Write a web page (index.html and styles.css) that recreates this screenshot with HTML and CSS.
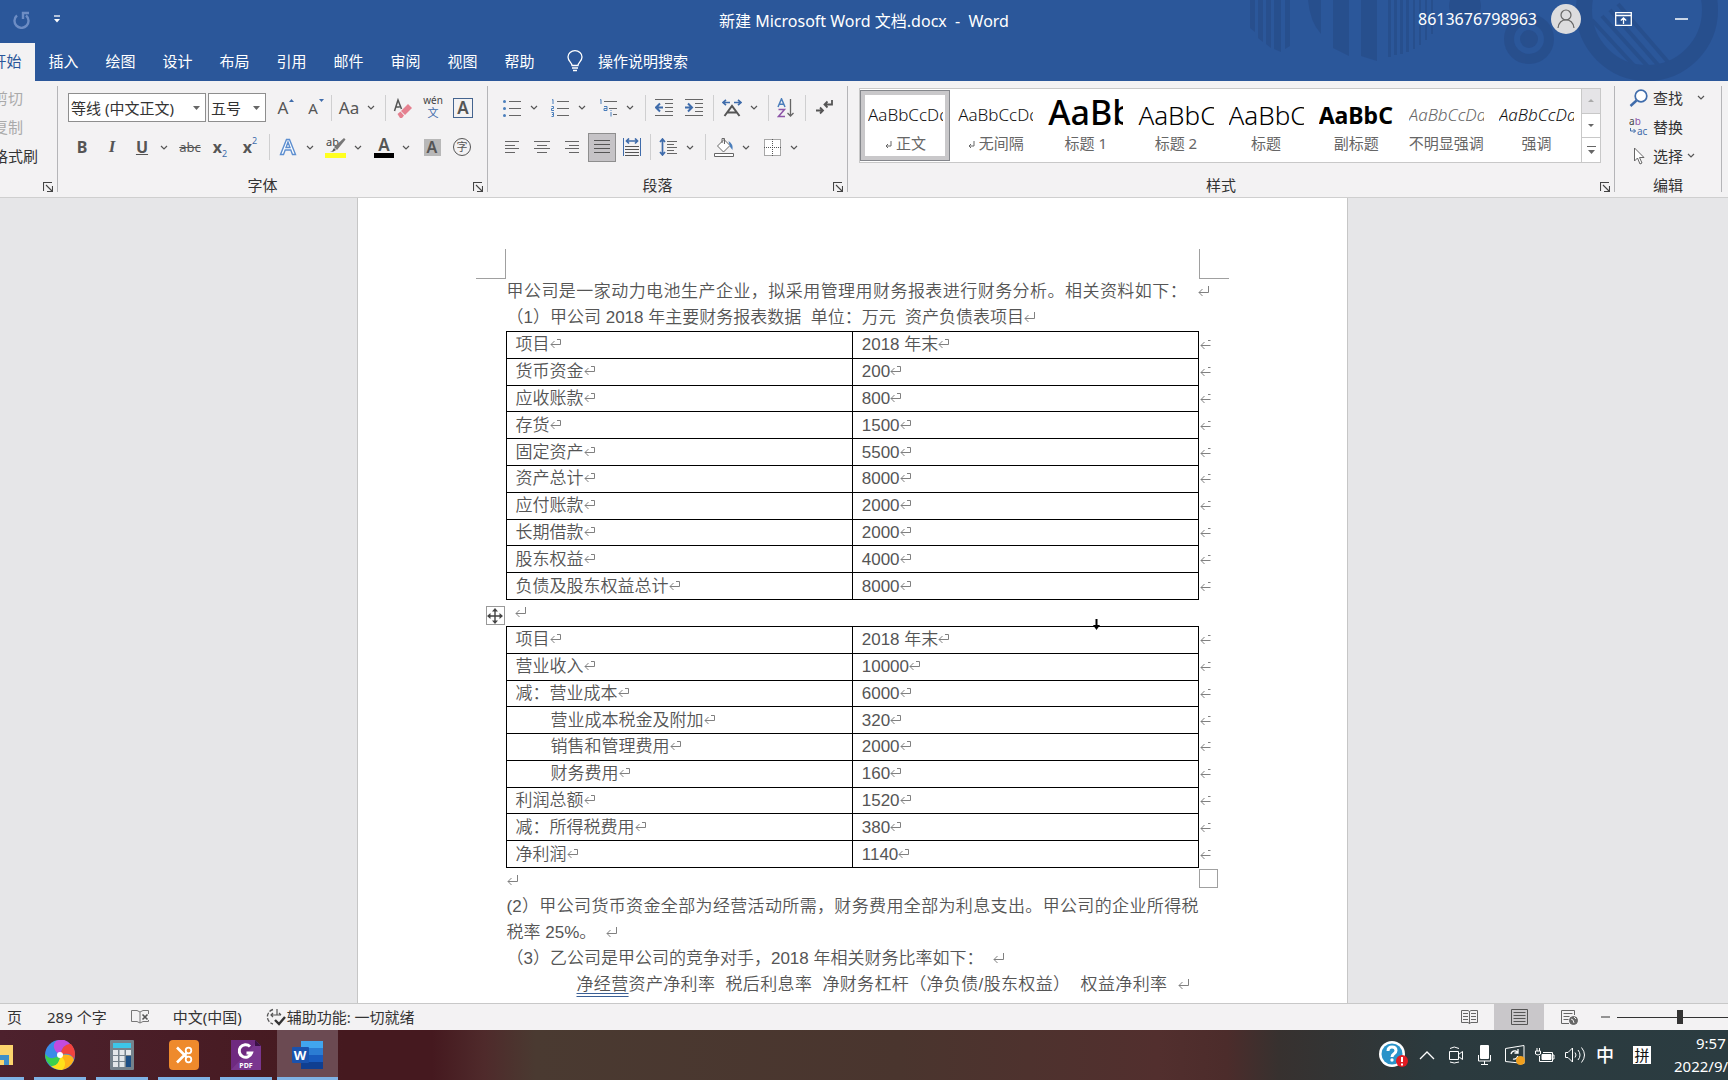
FILE: index.html
```html
<!DOCTYPE html>
<html lang="zh-CN">
<head>
<meta charset="utf-8">
<title>新建 Microsoft Word 文档.docx - Word</title>
<link rel="stylesheet" href="styles.css">
</head>
<body>
<svg class="sprite" aria-hidden="true">
  <symbol id="chev" viewBox="0 0 8 6"><path d="M1 1l3 3 3-3" fill="none" stroke="#555" stroke-width="1.2"/></symbol>
  <symbol id="launch" viewBox="0 0 10 10"><path d="M.5 9V.5H9M3 3l6 6M9.500 4v5.500H4" fill="none" stroke="#444" stroke-width="1.100"/></symbol>
  <symbol id="pm" viewBox="0 0 12 11"><path d="M10.500 0v6.500H1M4.500 3L1 6.500 4.500 10" fill="none" stroke="#808080"/></symbol>
  <symbol id="cm" viewBox="0 0 12 11"><path d="M7 .5h3.500v5H1M4.500 2L1 5.500 4.500 9" fill="none" stroke="#808080"/></symbol>
  <symbol id="rm" viewBox="0 0 12 11"><path d="M1 6.500h9.500M4.500 3L1 6.500 4.500 10M8 1.500h2.500" fill="none" stroke="#808080"/></symbol>
</svg>

<header class="titlebar">
  <svg class="deco" viewBox="0 0 508 81" aria-hidden="true">
    <g fill="#264a86" opacity=".6">
      <path d="M30 0h5v32l-5-4zM38 0h5v42l-5-4zM46 0h5v48l-5-4zM54 0h7v52l-7-3zM65 0h5v46l-5 3z"/>
      <path d="M88 0h13v34q-11-12-13-34zM113 0h16v56l-16-8zM141 0h16v61l-16-5zM168 0h3v57h-3zM174 0h3v55h-3zM180 0h3v54h-3zM186 0h3v52h-3zM193 0h2v49h-2zM199 0h2v45h-2zM205 0h2v40h-2zM211 0h2v34h-2z"/>
      <circle cx="245" cy="6" r="16"/><circle cx="309" cy="39" r="9"/>
    </g>
    <g fill="none" stroke="#264a86" opacity=".6">
      <circle cx="309" cy="39" r="20" stroke-width="10"/>
      <circle cx="427" cy="10" r="63" stroke-width="16"/>
      <path d="M372 20l46 50M382 16l48 53M390 10l49 56M398 4l50 58" stroke-width="4"/>
    </g>
  </svg>
  <div class="quick">
    <button class="plain" aria-label="重复"><svg width="18" height="18" viewBox="0 0 18 18"><path d="M4 4.500a7 7 0 1 0 9 0M10 8V2h6" fill="none" stroke="#6d8dc4" stroke-width="2.400"/></svg></button>
    <button class="plain" aria-label="自定义快速访问工具栏"><svg width="8" height="9" viewBox="0 0 8 9"><path d="M1 1h6" stroke="#fff" stroke-width="1.300"/><path d="M1 4h6L4 7.500z" fill="#fff"/></svg></button>
  </div>
  <h1 class="doc-title">新建 Microsoft Word 文档.docx&nbsp; -&nbsp; Word</h1>
  <div class="account">
    <span>8613676798963</span>
    <button class="plain avatar" aria-label="帐户"><svg width="30" height="30" viewBox="0 0 30 30"><circle cx="15" cy="15" r="15" fill="#dcdcde"/><circle cx="15" cy="11" r="5" fill="none" stroke="#666" stroke-width="1.200"/><path d="M7 24c1-11 15-11 16 0" fill="none" stroke="#666" stroke-width="1.200"/></svg></button>
    <button class="plain win" aria-label="功能区显示选项"><svg width="17" height="14" viewBox="0 0 17 14" fill="none" stroke="#fff"><path d="M.7.7h15.600v12.600H.7zM.7 3.500h15.600M8.500 12V6M5.800 8.500l2.700-2.700 2.700 2.700" stroke-width="1.300"/></svg></button>
    <button class="plain win" aria-label="最小化"><svg width="13" height="2"><path d="M0 1h13" stroke="#fff" stroke-width="1.500"/></svg></button>
  </div>
</header>

<nav class="tabs">
  <button class="tab active">开始</button><button class="tab">插入</button><button class="tab">绘图</button><button class="tab">设计</button><button class="tab">布局</button><button class="tab">引用</button><button class="tab">邮件</button><button class="tab">审阅</button><button class="tab">视图</button><button class="tab">帮助</button>
  <button class="tell"><svg width="16" height="22" viewBox="0 0 16 22" fill="none" stroke="#fff" stroke-width="1.300"><path d="M5 15.500c0-3-4-4-4-8.500a7 6.300 0 0 1 14 0c0 4.500-4 5.500-4 8.500zM5 18h6M6 20.500h4"/></svg>操作说明搜索</button>
</nav>

<section class="ribbon" aria-label="开始">
  <div class="group clip">
    <div class="stack"><button class="plain off">剪切</button><button class="plain off">复制</button><button class="plain">格式刷</button></div>
    <div class="caption"><button class="plain launcher" aria-label="剪贴板设置"><svg width="10" height="10"><use href="#launch"/></svg></button></div>
  </div>

  <div class="group font">
    <div class="row first">
      <label class="combo family"><input aria-label="字体" value="等线 (中文正文)"><svg width="7" height="4"><path d="M0 0h7L3.500 4z" fill="#666"/></svg></label>
      <label class="combo size"><input aria-label="字号" value="五号"><svg width="7" height="4"><path d="M0 0h7L3.500 4z" fill="#666"/></svg></label>
      <button class="tb" aria-label="增大字号"><span class="glyph">A</span><svg class="tick" width="5" height="3"><path d="M0 3h5L2.500 0z" fill="#3f6cab"/></svg></button>
      <button class="tb" aria-label="减小字号"><span class="glyph small">A</span><svg class="tick" width="5" height="3"><path d="M0 0h5L2.500 3z" fill="#3f6cab"/></svg></button>
      <i class="sep"></i>
      <button class="tb split" aria-label="更改大小写"><span class="glyph light">Aa</span><svg class="chev"><use href="#chev"/></svg></button>
      <i class="sep"></i>
      <button class="tb" aria-label="清除格式"><svg width="20" height="20" viewBox="0 0 20 20"><path d="M1.500 13L5 2l3.500 9M2.800 9h4" fill="none" stroke="#555" stroke-width="1.500"/><path d="M8 13l7-7 4 4-7 7z" fill="#e5808f"/><path d="M4.500 16l3-2.500 3.500 4-2 2.500H7z" fill="#e5808f"/></svg></button>
      <button class="tb wen" aria-label="拼音指南"><span>wén</span><b>文</b></button>
      <button class="tb" aria-label="字符边框"><span class="boxed">A</span></button>
    </div>
    <div class="row second">
      <button class="tb glyph bold">B</button>
      <button class="tb glyph ital">I</button>
      <button class="tb split"><span class="glyph under">U</span><svg class="chev"><use href="#chev"/></svg></button>
      <button class="tb glyph strike">abc</button>
      <button class="tb glyph bold">x<sub>2</sub></button>
      <button class="tb glyph bold">x<sup>2</sup></button>
      <i class="sep wide"></i>
      <button class="tb split" aria-label="文本效果"><svg width="18" height="18" viewBox="0 0 18 18"><path d="M1.500 16.500L7.500 1.500h3l6 15h-3l-1.700-4.500H6.200L4.500 16.500zM7 9.500h4L9 4z" fill="#fff" stroke="#5d8fd0" stroke-width="1.400"/></svg><svg class="chev"><use href="#chev"/></svg></button>
      <button class="tb split" aria-label="突出显示"><svg width="22" height="22" viewBox="0 0 22 22"><rect y="17" width="21" height="5" fill="#ffff20"/><text x="1" y="10" font-size="11" fill="#444">ab</text><path d="M9 11L19 2l1.500 1.500L12 14z" fill="#777"/><path d="M5 16q3-1 4-4l2 2q-2 2-6 2z" fill="#555"/></svg><svg class="chev"><use href="#chev"/></svg></button>
      <button class="tb split" aria-label="字体颜色"><span class="colorbar">A</span><svg class="chev"><use href="#chev"/></svg></button>
      <button class="tb" aria-label="字符底纹"><span class="shaded">A</span></button>
      <button class="tb" aria-label="带圈字符"><span class="ringed">字</span></button>
    </div>
    <div class="caption">字体<button class="plain launcher" aria-label="字体设置"><svg width="10" height="10"><use href="#launch"/></svg></button></div>
  </div>

  <div class="group para">
    <div class="row first">
      <button class="tb split" aria-label="项目符号"><svg width="18" height="18" viewBox="0 0 18 18"><path d="M6 2.500h12M6 9.500h12M6 16.500h12" stroke="#666"/><g fill="#4a7ebb"><circle cx="1.500" cy="2.500" r="1.500"/><circle cx="1.500" cy="9.500" r="1.500"/><circle cx="1.500" cy="16.500" r="1.500"/></g></svg><svg class="chev"><use href="#chev"/></svg></button>
      <button class="tb split" aria-label="编号"><svg width="18" height="18" viewBox="0 0 18 18"><path d="M6 2.500h12M6 9.500h12M6 16.500h12" stroke="#666"/><path d="M1 1l1-.5V5M.5 7.500h2v2h-2v2h2.500M.5 13.500h2v4h-2M1 15.500h1.500" fill="none" stroke="#4a7ebb"/></svg><svg class="chev"><use href="#chev"/></svg></button>
      <button class="tb split" aria-label="多级列表"><svg width="18" height="18" viewBox="0 0 18 18"><path d="M5 2.500h13M10 9.500h8M14 15.500h4" stroke="#666"/><path d="M1 1l1-.5V5M5 7.500h3v4H5v-2h3M12 13v4.500M12 11v1" fill="none" stroke="#4a7ebb"/></svg><svg class="chev"><use href="#chev"/></svg></button>
      <i class="sep wide"></i>
      <button class="tb" aria-label="减少缩进"><svg width="18" height="17" viewBox="0 0 18 17"><path d="M0 .5h18M10 4.500h8M10 8.500h8M10 12.500h8M0 16.500h18" stroke="#666"/><path d="M8 8.500H2M5 4.500l-4 4 4 4" fill="none" stroke="#3f6cab" stroke-width="2"/></svg></button>
      <button class="tb" aria-label="增加缩进"><svg width="18" height="17" viewBox="0 0 18 17"><path d="M0 .5h18M10 4.500h8M10 8.500h8M10 12.500h8M0 16.500h18" stroke="#666"/><path d="M0 8.500h6M3 4.500l4 4-4 4" fill="none" stroke="#3f6cab" stroke-width="2"/></svg></button>
      <i class="sep wide"></i>
      <button class="tb split" aria-label="中文版式"><svg width="20" height="18" viewBox="0 0 20 18"><path d="M2.500 17L10 7l7.500 10M5.500 13.500h9" fill="none" stroke="#555" stroke-width="2"/><path d="M8 3.500H1M4 .8L1 3.500 4 6.200M12 3.500h7M16 .8l3 2.700-3 2.700" fill="none" stroke="#3f6cab" stroke-width="1.600"/></svg><svg class="chev"><use href="#chev"/></svg></button>
      <i class="sep"></i>
      <button class="tb" aria-label="排序"><svg width="18" height="20" viewBox="0 0 18 20"><path d="M1 9L4.500.8 8 9M2.300 6.300h4.400" fill="none" stroke="#4a7ebb" stroke-width="1.500"/><path d="M1.500 11.500h6l-6 7h6.500" fill="none" stroke="#8d55a8" stroke-width="1.500"/><path d="M13.500 1v17M10.500 15l3 3 3-3" fill="none" stroke="#666" stroke-width="1.300"/></svg></button>
      <i class="sep wide"></i>
      <button class="tb" aria-label="显示编辑标记"><svg width="17" height="15" viewBox="0 0 17 15"><path d="M16 0v4.500H9M11.500 1.500l-3 3 3 3M0 10.500h6M4 7.500l3 3-3 3" fill="none" stroke="#555" stroke-width="1.800"/></svg></button>
    </div>
    <div class="row second">
      <button class="tb" aria-label="左对齐"><svg width="14" height="12"><path d="M0 .5h14M0 4.500h10M0 7.500h14M0 11.500h10" stroke="#666"/></svg></button>
      <button class="tb" aria-label="居中"><svg width="16" height="12"><path d="M0 .5h16M3 4.500h10M0 7.500h16M3 11.500h10" stroke="#666"/></svg></button>
      <button class="tb" aria-label="右对齐"><svg width="14" height="12"><path d="M0 .5h14M4 4.500h10M0 7.500h14M4 11.500h10" stroke="#666"/></svg></button>
      <button class="tb pressed" aria-label="两端对齐" aria-pressed="true"><svg width="16" height="14"><path d="M0 .5h16M0 4.500h16M0 8.500h16M0 12.500h16" stroke="#555"/></svg></button>
      <button class="tb" aria-label="分散对齐"><svg width="18" height="18" viewBox="0 0 18 18"><path d="M.5 0v18M17.500 0v18" stroke="#3f6cab"/><path d="M2 8.500h14M2 11.500h14M2 14.500h14M2 17.500h14" stroke="#555"/><path d="M3 3h12M6 .5L3.500 3 6 5.500M12 .5L14.500 3 12 5.500" fill="none" stroke="#3f6cab" stroke-width="1.700"/></svg></button>
      <i class="sep"></i>
      <button class="tb split" aria-label="行距"><svg width="18" height="18" viewBox="0 0 18 18"><path d="M8 3.500h10M8 6.500h7M8 9.500h10M8 12.500h7M8 15.500h10" stroke="#666"/><path d="M3.500 1v16M1 4l2.500-3L6 4M1 14l2.500 3L6 14" fill="none" stroke="#3f6cab" stroke-width="1.700"/></svg><svg class="chev"><use href="#chev"/></svg></button>
      <i class="sep wide"></i>
      <button class="tb split" aria-label="底纹"><svg width="20" height="20" viewBox="0 0 20 20"><path d="M10 2.500L3.500 9l6 6L16 8.500zM8 6V1.500h2.500V7" fill="#fff" stroke="#666"/><path d="M14.500 4q5 3 4 9-3-3-3-5z" fill="#4a7ebb"/><path d="M.5 16.500h19v3H.5z" fill="#fff" stroke="#666"/></svg><svg class="chev"><use href="#chev"/></svg></button>
      <button class="tb split" aria-label="边框"><svg width="17" height="17" viewBox="0 0 17 17"><path d="M.5.5h16v16H.5zM8.500 0v17M0 8.500h17" fill="#fff" stroke="#555" stroke-dasharray="1 1"/></svg><svg class="chev"><use href="#chev"/></svg></button>
    </div>
    <div class="caption">段落<button class="plain launcher" aria-label="段落设置"><svg width="10" height="10"><use href="#launch"/></svg></button></div>
  </div>

  <div class="group styles">
    <div class="gallery">
      <button class="style chosen"><span class="sample">AaBbCcDd</span><span class="name"><svg width="7" height="8"><path d="M6 0v5H1M3 3L1 5l2 2" fill="none" stroke="#666"/></svg> 正文</span></button>
      <button class="style"><span class="sample">AaBbCcDd</span><span class="name"><svg width="7" height="8"><path d="M6 0v5H1M3 3L1 5l2 2" fill="none" stroke="#666"/></svg> 无间隔</span></button>
      <button class="style"><span class="sample h1">AaBb</span><span class="name">标题 1</span></button>
      <button class="style"><span class="sample h2">AaBbC</span><span class="name">标题 2</span></button>
      <button class="style"><span class="sample h2">AaBbC</span><span class="name">标题</span></button>
      <button class="style"><span class="sample sub">AaBbC</span><span class="name">副标题</span></button>
      <button class="style"><span class="sample em subtle">AaBbCcDd</span><span class="name">不明显强调</span></button>
      <button class="style"><span class="sample em">AaBbCcDd</span><span class="name">强调</span></button>
      <div class="scroll">
        <button aria-label="上一行" disabled><svg width="6" height="3"><path d="M0 3h6L3 0z" fill="#aaa"/></svg></button>
        <button aria-label="下一行"><svg width="6" height="3"><path d="M0 0h6L3 3z" fill="#666"/></svg></button>
        <button aria-label="其他样式"><svg width="9" height="8"><path d="M0 .5h9" stroke="#666"/><path d="M1 4h7L4.500 8z" fill="#666"/></svg></button>
      </div>
    </div>
    <div class="caption">样式<button class="plain launcher" aria-label="样式窗格"><svg width="10" height="10"><use href="#launch"/></svg></button></div>
  </div>

  <div class="group edit">
    <div class="stack">
      <button class="plain find"><svg width="20" height="18" viewBox="0 0 20 18"><circle cx="12" cy="7" r="5.800" fill="#fff" stroke="#3f6cab" stroke-width="1.700"/><path d="M7.500 11.500L1.500 17" stroke="#3f6cab" stroke-width="2.400"/></svg>查找<svg class="chev"><use href="#chev"/></svg></button>
      <button class="plain"><svg width="20" height="18" viewBox="0 0 20 18"><text x="0" y="7" font-size="10" fill="#444">a<tspan fill="#8d55a8">b</tspan></text><text x="8" y="17" font-size="10" fill="#3f6cab">ac</text><path d="M1.500 10v3h5M4.500 11l2 2-2 2" fill="none" stroke="#3f6cab"/></svg>替换</button>
      <button class="plain pick"><svg width="20" height="18" viewBox="0 0 20 18"><path d="M5.500 1v13l3-3 2.500 6 2-1-2.500-5.500H15z" fill="#fff" stroke="#666"/></svg>选择<svg class="chev"><use href="#chev"/></svg></button>
    </div>
    <div class="caption">编辑</div>
  </div>
</section>

<main class="workspace">
  <article class="page">
    <div class="crop-marks"><i class="mark left"></i><i class="mark right"></i></div>
    <div class="body">
      <p class="full hang">甲公司是一家动力电池生产企业，拟采用管理用财务报表进行财务分析。相关资料如下：&nbsp; <svg class="pm"><use href="#pm"/></svg></p>
      <p>（1）甲公司 2018 年主要财务报表数据&nbsp; 单位：万元&nbsp; 资产负债表项目<svg class="pm"><use href="#pm"/></svg></p>
      <table class="sheet balance">
        <colgroup><col><col><col class="end"></colgroup>
        <tbody>
        <tr><td>项目<svg class="pm"><use href="#cm"/></svg></td><td>2018 年末<svg class="pm"><use href="#cm"/></svg></td><td class="end"><svg class="pm"><use href="#rm"/></svg></td></tr>
        <tr><td>货币资金<svg class="pm"><use href="#cm"/></svg></td><td>200<svg class="pm"><use href="#cm"/></svg></td><td class="end"><svg class="pm"><use href="#rm"/></svg></td></tr>
        <tr><td>应收账款<svg class="pm"><use href="#cm"/></svg></td><td>800<svg class="pm"><use href="#cm"/></svg></td><td class="end"><svg class="pm"><use href="#rm"/></svg></td></tr>
        <tr><td>存货<svg class="pm"><use href="#cm"/></svg></td><td>1500<svg class="pm"><use href="#cm"/></svg></td><td class="end"><svg class="pm"><use href="#rm"/></svg></td></tr>
        <tr><td>固定资产<svg class="pm"><use href="#cm"/></svg></td><td>5500<svg class="pm"><use href="#cm"/></svg></td><td class="end"><svg class="pm"><use href="#rm"/></svg></td></tr>
        <tr><td>资产总计<svg class="pm"><use href="#cm"/></svg></td><td>8000<svg class="pm"><use href="#cm"/></svg></td><td class="end"><svg class="pm"><use href="#rm"/></svg></td></tr>
        <tr><td>应付账款<svg class="pm"><use href="#cm"/></svg></td><td>2000<svg class="pm"><use href="#cm"/></svg></td><td class="end"><svg class="pm"><use href="#rm"/></svg></td></tr>
        <tr><td>长期借款<svg class="pm"><use href="#cm"/></svg></td><td>2000<svg class="pm"><use href="#cm"/></svg></td><td class="end"><svg class="pm"><use href="#rm"/></svg></td></tr>
        <tr><td>股东权益<svg class="pm"><use href="#cm"/></svg></td><td>4000<svg class="pm"><use href="#cm"/></svg></td><td class="end"><svg class="pm"><use href="#rm"/></svg></td></tr>
        <tr><td>负债及股东权益总计<svg class="pm"><use href="#cm"/></svg></td><td>8000<svg class="pm"><use href="#cm"/></svg></td><td class="end"><svg class="pm"><use href="#rm"/></svg></td></tr>
        </tbody>
      </table>
      <p class="between"><svg class="pm"><use href="#pm"/></svg></p>
      <div class="selected-table">
        <button class="handle" aria-label="移动表格"><svg width="16" height="16" viewBox="0 0 16 16"><path d="M8 2v12M2 8h12" stroke="#444" stroke-width="1.400"/><path d="M8 0l3 3.500H5zM8 16l3-3.500H5zM0 8l3.500-3v6zM16 8l-3.500-3v6z" fill="#444"/></svg></button>
        <table class="sheet income">
          <colgroup><col><col><col class="end"></colgroup>
          <tbody>
          <tr><td>项目<svg class="pm"><use href="#cm"/></svg></td><td>2018 年末<svg class="pm"><use href="#cm"/></svg></td><td class="end"><svg class="pm"><use href="#rm"/></svg></td></tr>
          <tr><td>营业收入<svg class="pm"><use href="#cm"/></svg></td><td>10000<svg class="pm"><use href="#cm"/></svg></td><td class="end"><svg class="pm"><use href="#rm"/></svg></td></tr>
          <tr><td>减：营业成本<svg class="pm"><use href="#cm"/></svg></td><td>6000<svg class="pm"><use href="#cm"/></svg></td><td class="end"><svg class="pm"><use href="#rm"/></svg></td></tr>
          <tr><td class="sub-item">营业成本税金及附加<svg class="pm"><use href="#cm"/></svg></td><td>320<svg class="pm"><use href="#cm"/></svg></td><td class="end"><svg class="pm"><use href="#rm"/></svg></td></tr>
          <tr><td class="sub-item">销售和管理费用<svg class="pm"><use href="#cm"/></svg></td><td>2000<svg class="pm"><use href="#cm"/></svg></td><td class="end"><svg class="pm"><use href="#rm"/></svg></td></tr>
          <tr><td class="sub-item">财务费用<svg class="pm"><use href="#cm"/></svg></td><td>160<svg class="pm"><use href="#cm"/></svg></td><td class="end"><svg class="pm"><use href="#rm"/></svg></td></tr>
          <tr><td>利润总额<svg class="pm"><use href="#cm"/></svg></td><td>1520<svg class="pm"><use href="#cm"/></svg></td><td class="end"><svg class="pm"><use href="#rm"/></svg></td></tr>
          <tr><td>减：所得税费用<svg class="pm"><use href="#cm"/></svg></td><td>380<svg class="pm"><use href="#cm"/></svg></td><td class="end"><svg class="pm"><use href="#rm"/></svg></td></tr>
          <tr><td>净利润<svg class="pm"><use href="#cm"/></svg></td><td>1140<svg class="pm"><use href="#cm"/></svg></td><td class="end"><svg class="pm"><use href="#rm"/></svg></td></tr>
          </tbody>
        </table>
        <i class="resizer"></i>
        <svg class="cursor" width="7" height="12"><path d="M3.500 0v8" stroke="#000" stroke-width="2"/><path d="M0 6h7l-3.500 5z"/></svg>
      </div>
      <p><svg class="pm"><use href="#pm"/></svg></p>
      <p>(2）甲公司货币资金全部为经营活动所需，财务费用全部为利息支出。甲公司的企业所得税税率 25%。&nbsp; <svg class="pm"><use href="#pm"/></svg></p>
      <p>（3）乙公司是甲公司的竞争对手，2018 年相关财务比率如下：&nbsp; <svg class="pm"><use href="#pm"/></svg></p>
      <p class="full ratios"><u>净经营</u>资产净利率&nbsp; 税后利息率&nbsp; 净财务杠杆（净负债/股东权益）&nbsp; 权益净利率&nbsp; <svg class="pm"><use href="#pm"/></svg></p>
    </div>
  </article>
</main>

<footer class="status">
  <span>页</span><span class="words">289 个字</span>
  <button class="plain proof" aria-label="校对"><svg width="18" height="14" viewBox="0 0 18 14" fill="none" stroke="#777"><path d="M9 13V2L6 .5H.5v11H6zM9 2l3-1.500h5.500V4M9 13l3-1.500h5.500V10"/><path d="M11.500 4.500l5 5M16.500 4.500l-5 5" stroke="#555" stroke-width="1.600"/></svg></button>
  <span class="lang">中文(中国)</span>
  <svg width="21" height="18" viewBox="0 0 21 18" fill="none" stroke="#555"><path d="M7 1.500A7.500 7.500 0 0 0 7 16" stroke-dasharray="4 1.500" stroke-width="1.300"/><path d="M11 1v6M5 7h10M7 5L5 7l2 2M13 5l2 2" stroke-width="1.200"/><path d="M9 12l4 4 6-7" stroke="#333" stroke-width="2.400"/></svg>
  <span class="a11y">辅助功能: 一切就绪</span>
  <div class="views">
    <button class="plain" aria-label="阅读视图"><svg width="17" height="15" viewBox="0 0 17 15" fill="none" stroke="#666"><path d="M8.500 14V1.500M8.500 1.500L7 .5H.5v12H7l1.500 1 1.500-1h6.500V.5H10zM2 3.500h5M2 6.500h5M2 9.500h5M10 3.500h5M10 6.500h5M10 9.500h5"/></svg></button>
    <button class="plain on" aria-label="页面视图"><svg width="17" height="16" fill="none" stroke="#555"><path d="M.5.5h16v15H.5zM2.500 3.500h12M2.500 6.500h12M2.500 9.500h12M2.500 12.500h12"/></svg></button>
    <button class="plain" aria-label="Web 版式视图"><svg width="17" height="15" viewBox="0 0 17 15" fill="none" stroke="#666"><path d="M8 13.500H.5V.5h13V5M2.500 3.500h9M2.500 6.500h6M2.500 9.500h5"/><circle cx="12.500" cy="10.500" r="4" fill="#666"/><path d="M10 9l2 1 1 3M13 7l2 2" stroke="#eee"/></svg></button>
  </div>
  <button class="plain minus" aria-label="缩小"><svg width="9" height="2"><path d="M0 1h9" stroke="#333"/></svg></button>
  <input class="zoom" type="range" min="0" max="100" value="50" aria-label="缩放">
</footer>

<div class="taskbar">
  <div class="apps">
    <button class="app cut" aria-label="文件资源管理器"><svg width="30" height="30" viewBox="0 0 30 30"><path d="M0 5h30v20H0z" fill="#fbd46d"/><path d="M0 15h26v10h-5v-5H0z" fill="#3f8fc9"/></svg></button>
    <button class="app" aria-label="浏览器"><svg width="30" height="30" viewBox="0 0 30 30"><circle cx="15" cy="15" r="15" fill="#3b8be8"/><path d="M15 15Q5 8 11 1q9-4 15 4-8-2-11 10z" fill="#c24be0"/><path d="M15 15Q18 3 26 4q6 7 3 15-4-8-14-4z" fill="#f2433f"/><path d="M15 15q12-2 14 5-4 9-13 10 6-6-1-15z" fill="#ffb31a"/><path d="M15 15q9 8 2 15-7 0-11-4 9-1 9-11z" fill="#ffe11a"/><path d="M15 15q-1 12-9 11-6-5-6-12 6 8 15 1z" fill="#3bd04c"/><circle cx="15" cy="15" r="3" fill="#fff"/></svg></button>
    <button class="app" aria-label="计算器"><svg width="24" height="30" viewBox="0 0 24 30"><rect width="24" height="30" rx="1" fill="#75828c"/><path d="M3 3h18v5H3z" fill="#3cc6e8"/><path d="M3 10h5v5H3zM9.500 10h5v5h-5zM16 10h5v5h-5zM3 16h5v5H3zM9.500 16h5v5h-5zM3 22h5v5H3zM9.500 22h5v5h-5z" fill="#e3e7ea"/><path d="M16 16h5v11h-5z" fill="#1c4f86"/></svg></button>
    <button class="app" aria-label="截图工具"><svg width="30" height="30" viewBox="0 0 30 30"><rect width="30" height="30" rx="4" fill="#ee8a2c"/><path d="M8 7.500l10 10M8 22.500l10-10" stroke="#fff" stroke-width="2.600"/><g fill="none" stroke="#fff" stroke-width="1.800"><circle cx="19.500" cy="10.500" r="2.800"/><circle cx="19.500" cy="19.500" r="2.800"/></g></svg></button>
    <button class="app" aria-label="PDF 编辑器"><svg width="30" height="30" viewBox="0 0 30 30"><path d="M0 0h24l6 6v24H0z" fill="#6f2a80"/><path d="M0 30L26 2l4 4v24z" fill="#82409a" opacity=".6"/><path d="M24 0v6h6z" fill="#3b1146"/><path d="M19 6.500a6.300 6.300 0 1 0 1.500 6.500h-5" fill="none" stroke="#fff" stroke-width="3"/><text x="15" y="28" font-size="7" font-weight="700" text-anchor="middle" fill="#fff">PDF</text></svg></button>
    <button class="app current" aria-label="Word"><svg width="32" height="30" viewBox="0 0 32 30"><path d="M9 1h22v8H9z" fill="#41a5ee"/><path d="M9 8h22v7H9z" fill="#2b7cd3"/><path d="M9 15h22v7H9z" fill="#185abd"/><path d="M9 22h22v7H9z" fill="#103f91"/><rect y="7" width="17" height="16" rx="1" fill="#1a52ad"/><text x="8" y="20" font-size="13" font-weight="700" text-anchor="middle" fill="#fff">W</text></svg></button>
  </div>
  <div class="tray">
    <svg width="30" height="28" viewBox="0 0 30 28"><circle cx="13" cy="13" r="13" fill="#fff"/><circle cx="13" cy="13" r="10.500" fill="#2a93c9"/><path d="M9 10q0-4 4-4t4 3.500q0 2-2 3.200t-2 3.300" fill="none" stroke="#fff" stroke-width="3"/><circle cx="13" cy="19" r="1.700" fill="#fff"/><circle cx="23" cy="20" r="6" fill="#e11b22"/><path d="M23 16v5M23 22.500v2" stroke="#fff" stroke-width="2"/></svg>
    <svg class="airy" width="16" height="10" fill="none" stroke="#fff" stroke-width="1.300"><path d="M1 9l7-7 7 7"/></svg>
    <svg class="airy" width="15" height="18" viewBox="0 0 15 18" fill="none" stroke="#fff"><path d="M.5 5.500h9v8h-9zM9.500 8.500l4-3v8l-4-3M1 2.500q4-3 9 0M1 16q4 2 9 0"/></svg>
    <svg class="airy" width="13" height="20" viewBox="0 0 13 20"><rect x="2" width="9" height="14" rx="1" fill="#fff"/><path d="M.5 10v6h12v-6M6.500 16v3M3 19.500h7" fill="none" stroke="#fff"/></svg>
    <svg width="20" height="20" viewBox="0 0 20 20" fill="none" stroke="#fff"><path d="M.5 3.500l18.500-3v18l-18.500-2z"/><path d="M6 9q1-4 5-3l2 1.500M13 4v4H9.500M13 11q-2 4-5 3" stroke-width="1.300"/><circle cx="15.500" cy="15.500" r="4.500" fill="#f0a01e" stroke="none"/></svg>
    <svg width="20" height="15" viewBox="0 0 20 15" fill="none" stroke="#fff"><path d="M4.500 8v5.500h13v-9H8M17.500 7h1.500v4h-1.500"/><path d="M7 6.500h9v5H7z" fill="#fff"/><path d="M.5 3h5v3q-2.500 2-5 0zM2 3V0M4.500 3V0"/></svg>
    <svg width="21" height="18" viewBox="0 0 21 18" fill="none" stroke="#fff"><path d="M.5 6.500H3L7.500 2v14L3 11.500H.5zM10 6.500q2 2.500 0 5M13 4q4 5 0 10M16.500 1.500q6 7.500 0 15"/></svg>
    <span class="ime">中</span>
    <span class="pinyin">拼</span>
    <div class="clock"><span>9:57</span><span>2022/9/</span></div>
  </div>
</div>
</body>
</html>
```

FILE: styles.css
```css
* { box-sizing: border-box; }
html, body { height: 100%; margin: 0; }
body {
  display: flex;
  flex-direction: column;
  overflow: hidden;
  font: 15px/20px "Noto Sans", "Noto Sans CJK SC", sans-serif;
  color: #333;
  background: #e6e6e8;
}
button, input { font: inherit; color: inherit; }
button { padding: 0; border: 0; background: none; white-space: nowrap; }
svg { flex: none; }
.sprite { position: absolute; width: 0; height: 0; }
.plain { display: flex; align-items: center; justify-content: center; }

/* title bar */
.titlebar {
  position: relative;
  flex: none;
  display: grid;
  grid-template-columns: 1fr auto 1fr;
  height: 43px;
  font-size: 16px;
  color: #fff;
  background: #2b579a;
}
.deco { position: absolute; top: 0; right: 0; width: 508px; height: 81px; }
.quick { display: flex; gap: 22px; padding: 0 0 4px 13px; }
.doc-title { margin: 0; font-size: 16px; font-weight: 400; line-height: 43px; }
.account {
  position: relative;
  display: flex;
  align-items: center;
  justify-content: flex-end;
  padding: 0 18px 5px 0;
}
.avatar { margin: 0 13px 0 14px; }
.win { width: 58px; height: 30px; }

/* ribbon tabs */
.tabs {
  flex: none;
  display: flex;
  height: 38px;
  margin-left: -22px;
  color: #fff;
  background: #2b579a;
}
.tab { position: relative; width: 57px; padding-bottom: 2px; }
.tab.active { color: #2b579a; background: #f3f2f3; }
.tell { position: relative; display: flex; align-items: center; gap: 15px; margin-left: 19px; padding-bottom: 2px; }

/* ribbon */
.ribbon {
  position: relative;
  flex: none;
  display: flex;
  height: 117px;
  padding: 5px 6px 5px 0;
  background: #f3f2f3;
  border-bottom: 1px solid #cfcfcf;
}
.group {
  display: grid;
  grid-template-rows: 42px 38px 26px;
  grid-template-columns: minmax(0, 1fr);
  border-right: 1px solid #b5b5b8;
}
.clip { width: 58px; overflow: hidden; }
.font { width: 430px; }
.para { width: 360px; }
.styles { flex: 1; min-width: 0; }
.edit { width: 107px; }
.stack { grid-row: 1 / 3; display: flex; flex-direction: column; padding-bottom: 1px; }
.stack button { height: 29px; flex: none; justify-content: flex-start; }
.clip .stack { margin-left: -7px; margin-top: -3px; }
.edit .stack { padding-left: 14px; margin-top: -3px; }
.edit .stack button { gap: 4px; }
.find .chev { margin-left: 10px; }
.off { color: #aaa; }
.caption {
  grid-row: 3;
  position: relative;
  height: 26px;
  padding: 9px 20px 0 0;
  text-align: center;
  line-height: 20px;
}
.edit .caption { padding-right: 0; }
.launcher { position: absolute; right: 4px; bottom: 0; }
.row { display: flex; align-items: center; }
.first { padding-top: 1px; }
.font .first { padding-left: 10px; }
.font .second, .para .row { padding-left: 9px; }
.combo {
  display: flex;
  align-items: center;
  height: 29px;
  margin-right: 2px;
  padding: 0 5px 0 2px;
  background: #fff;
  border: 1px solid #8e8e8e;
}
.combo input { flex: 1; min-width: 0; padding: 0; border: 0; background: none; outline: 0; }
.family { width: 138px; }
.size { width: 58px; }
.tb {
  position: relative;
  flex: none;
  display: flex;
  align-items: center;
  justify-content: center;
  width: 30px;
  height: 29px;
  color: #555;
}
.tb.split { width: 48px; padding-right: 18px; }
.chev { width: 8px; height: 6px; }
.split .chev { position: absolute; right: 7px; top: 12px; }
.sep { flex: none; width: 6px; height: 26px; background: linear-gradient(#cfcfd0, #cfcfd0) center / 1px 100% no-repeat; }
.sep.wide { width: 8px; }
.glyph { font-size: 17px; color: #555; }
.glyph.small { font-size: 15px; }
.tick { position: absolute; right: 4px; top: 6px; }
.bold, .under { font-weight: 700; font-size: 16px; }
.under { text-decoration: underline; }
.ital { font: italic 700 17px "Liberation Serif", serif; }
.strike { font-size: 13px; text-decoration: line-through; }
.bold sub, .bold sup { font-size: 9px; font-weight: 400; line-height: 9px; color: #3f6cab; }
.bold sub { align-self: flex-end; margin-bottom: 4px; }
.bold sup { align-self: flex-start; margin-top: 3px; }
.wen { flex-direction: column; font-size: 10px; line-height: 11px; color: #444; }
.wen b { font-size: 11px; font-weight: 400; line-height: 14px; color: #3f6cab; }
.boxed { width: 20px; border: 1px solid #44648f; font-size: 17px; font-weight: 600; line-height: 18px; }
.colorbar { width: 20px; border-bottom: 5px solid #000; font-size: 17px; font-weight: 600; line-height: 17px; }
.shaded { width: 17px; background: #b8b8b8; font-size: 16px; font-weight: 600; line-height: 17px; }
.ringed { width: 18px; border: 1px solid #555; border-radius: 50%; font-size: 11px; line-height: 16px; }
.pressed { width: 28px; margin: 0 1px; background: #c5c3c6; border: 1px solid #8e8e8e; }

/* style gallery */
.gallery {
  grid-row: 1 / 3;
  display: flex;
  height: 75px;
  margin: 2px 13px 0 11px;
  background: #fff;
  border: 1px solid #c8c8c8;
}
.style {
  flex: 1 1 90px;
  min-width: 0;
  display: flex;
  flex-direction: column;
  align-items: stretch;
  margin: 1px 0;
  padding: 5px 7px 5px 8px;
  overflow: hidden;
}
.chosen {
  padding: 0 2px 0 3px;
  border: 5px solid #c9c8ca;
  outline: 1px solid #85878c;
  outline-offset: -1px;
}
.sample {
  height: 38px;
  overflow: hidden;
  font-size: 17px;
  font-weight: 300;
  line-height: 40px;
  text-align: left;
  color: #111;
}
.sample.h1 { font-size: 34px; font-weight: 500; line-height: 34px; color: #000; }
.sample.h2 { font-size: 26px; color: #000; }
.sample.sub { font-size: 23px; font-weight: 700; color: #000; }
.sample.em { font-style: italic; }
.sample.subtle { color: #666; }
.name { color: #666; text-align: center; }
.scroll { flex: none; display: flex; flex-direction: column; width: 19px; border-left: 1px solid #c8c8c8; }
.scroll button { flex: 1; display: flex; align-items: center; justify-content: center; }
.scroll button + button { border-top: 1px solid #c8c8c8; }
.scroll button:disabled { background: #e5e4e7; }

/* document */
.workspace { flex: 1; min-height: 0; overflow: hidden; padding-right: 24px; background: #e6e6e8; }
.page {
  max-width: 991px;
  min-height: 100%;
  margin: 0 auto;
  background: #fff;
  border-left: 1px solid #c6c6c6;
  border-right: 1px solid #c6c6c6;
}
.crop-marks { display: flex; justify-content: space-between; align-items: flex-end; height: 81px; padding: 0 118px; }
.mark { width: 30px; height: 30px; border: 0 solid #a0a0a0; border-bottom-width: 1px; }
.mark.left { border-right-width: 1px; }
.mark.right { border-left-width: 1px; }
.body {
  margin: 0 148px;
  font: 17px/26px "Liberation Sans", "Noto Sans CJK SC", sans-serif;
  font-weight: 350;
  color: #555;
  text-align: justify;
}
.body p { margin: 0; padding-left: 1px; }
.full { text-align-last: justify; }
.body .hang { margin-right: -11px; }
.body .between { padding-left: 9px; }
.body .ratios { padding-left: 71px; padding-right: 9px; }
.ratios u { text-decoration: underline double #3a5f95; text-underline-offset: 3px; }
.pm { width: 12px; height: 11px; }
.sheet { width: calc(100% + 14px); table-layout: fixed; border-collapse: collapse; text-align: left; }
.balance { height: 269px; }
.income { height: 242px; }
.sheet td { padding: 1px 9px 0; border: 1px solid #000; line-height: 24px; }
.sheet .sub-item { padding-left: 44px; }
.sheet col.end { width: 14px; }
.sheet td.end { padding: 1px 0 0 1px; border-width: 0 0 0 1px; }
.selected-table { position: relative; }
.handle {
  position: absolute;
  left: -20px;
  top: -20px;
  display: flex;
  align-items: center;
  justify-content: center;
  width: 19px;
  height: 19px;
  background: #fff;
  border: 1px solid #999;
}
.resizer { position: absolute; right: -19px; bottom: -20px; width: 19px; height: 19px; border: 1px solid #a0a0a0; background: #fff; }
.cursor { position: absolute; right: 99px; top: -7px; }

/* status bar */
.status {
  flex: none;
  display: flex;
  align-items: center;
  height: 27px;
  padding-left: 7px;
  background: #f3f2f3;
  border-top: 1px solid #c8c8c8;
  overflow: hidden;
}
.words { margin-left: 25px; }
.proof { margin: 0 24px; }
.lang { margin-right: 24px; }
.views { display: flex; align-self: stretch; margin-left: auto; }
.views button { width: 50px; }
.on { background: #c9c7ca; }
.minus { margin-left: 7px; width: 9px; }
.zoom { appearance: none; width: 126px; height: 20px; margin: 0 -15px 0 7px; background: linear-gradient(#333, #333) center / 100% 1px no-repeat; }
.zoom::-webkit-slider-thumb { appearance: none; width: 6px; height: 14px; background: #333; border: 0; border-radius: 0; }

/* taskbar */
.taskbar {
  flex: none;
  display: flex;
  justify-content: space-between;
  height: 50px;
  overflow: hidden;
  color: #fff;
  background: linear-gradient(90deg, #4d212d, #45191f 20%, #45191f 25%, #4f2a2b 28%, #4a3a31 31%, #4a352e 52%, #522f2e 67%, #4c2c2b 71%, #37312f 74%, #2b3a3e 83%, #2b3c41);
}
.apps { display: flex; gap: 10px; margin-left: -28px; }
.app { display: flex; align-items: center; justify-content: center; width: 52px; border-bottom: 3px solid #7fb2e5; padding-top: 3px; }
.app.current { width: 61px; margin-left: -5px; background: #6b4a52; }
.tray { display: flex; align-items: center; gap: 10px; }
.airy { margin-right: 4px; }
.ime { font-size: 18px; font-weight: 500; }
.pinyin { width: 18px; height: 18px; margin-left: 9px; font-size: 15px; line-height: 18px; text-align: center; color: #111; background: #fff; }
.clock { display: flex; flex-direction: column; width: 54px; margin-left: 13px; line-height: 23px; white-space: nowrap; }
.clock span:first-child { padding-left: 22px; }
```
